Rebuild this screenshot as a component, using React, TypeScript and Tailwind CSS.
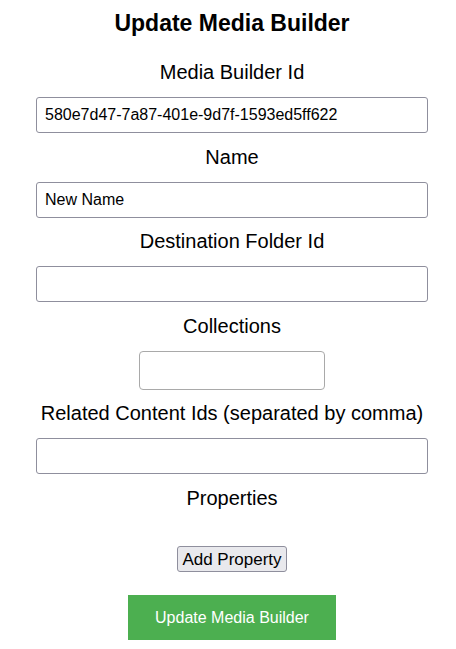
import { useState } from "react";

const font = { fontFamily: '"Liberation Sans", Arial, sans-serif' };

export default function App() {
  const [id, setId] = useState("580e7d47-7a87-401e-9d7f-1593ed5ff622");
  const [name, setName] = useState("New Name");
  const [folder, setFolder] = useState("");
  const [related, setRelated] = useState("");

  const inputCls =
    "block w-[392px] h-[36px] mb-[12.5px] px-2 border border-[#8f8f9d] rounded-[3px] bg-white text-[16px] text-black outline-none";
  const labelCls = "block text-[20px] leading-[23px] mb-[13px] text-black";

  return (
    <div className="w-[456px] min-h-[649px] pl-2 bg-white" style={font}>
      <form
        className="flex flex-col items-center"
        onSubmit={(e) => e.preventDefault()}
      >
        {/* 제목 */}
        <h2 className="mt-[10px] mb-[25px] text-[23px] leading-[26px] font-bold text-black">
          Update Media Builder
        </h2>

        <label className={labelCls}>Media Builder Id</label>
        <input
          className={inputCls}
          style={font}
          value={id}
          onChange={(e) => setId(e.target.value)}
        />

        <label className={labelCls}>Name</label>
        <input
          className={inputCls}
          style={font}
          value={name}
          onChange={(e) => setName(e.target.value)}
        />

        <label className={labelCls}>Destination Folder Id</label>
        <input
          className={inputCls}
          style={font}
          value={folder}
          onChange={(e) => setFolder(e.target.value)}
        />

        <label className={labelCls}>Collections</label>
        <div className="w-[186px] h-[39px] mb-[12.5px] border border-[#a9a9a9] rounded-[4px] bg-white" />

        <label className={labelCls}>Related Content Ids (separated by comma)</label>
        <input
          className={inputCls}
          style={font}
          value={related}
          onChange={(e) => setRelated(e.target.value)}
        />

        <label className="block text-[20px] leading-[23px] text-black">
          Properties
        </label>

        {/* 속성 추가 */}
        <button
          type="button"
          className="mt-[36.5px] w-[110px] h-[26px] border border-[#8f8f9d] rounded-[3px] bg-[#e9e9ed] text-[17px] leading-none text-black"
          style={font}
        >
          Add Property
        </button>

        <button
          type="submit"
          className="mt-[23px] w-[208px] h-[45px] bg-[#4caf50] text-white text-[16px]"
          style={font}
        >
          Update Media Builder
        </button>
      </form>
    </div>
  );
}
